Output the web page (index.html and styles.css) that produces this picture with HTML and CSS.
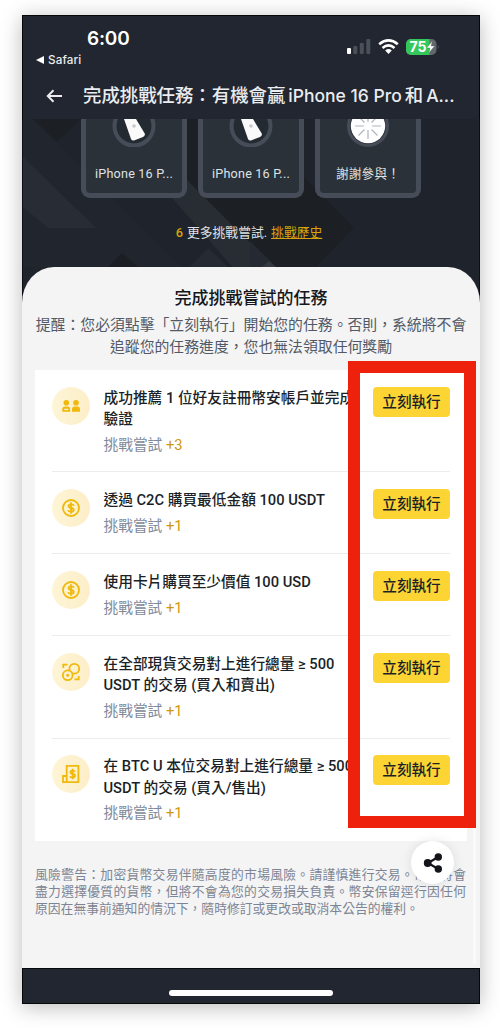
FILE: index.html
```html
<!DOCTYPE html>
<html lang="zh-Hant">
<head>
<meta charset="utf-8">
<title>完成挑戰任務</title>
<link rel="stylesheet" href="styles.css">
</head>
<body>
<main class="phone">
  <header class="top">
    <div class="status">
      <div class="clock">
        <div class="time">6:00</div>
        <div class="back-app"><svg width="8" height="8" viewBox="0 0 8 8"><path d="M0 4L8 0V8Z" fill="#fff"/></svg><span>Safari</span></div>
      </div>
      <div class="indicators">
        <svg width="24" height="16" viewBox="0 0 24 16"><rect y="9" width="4" height="6" rx="1" fill="#fff"/><g fill="#4b4f58"><rect x="6.3" y="7" width="4" height="8" rx="1"/><rect x="12.8" y="4" width="4" height="11" rx="1"/><rect x="19.3" y="0" width="4" height="15" rx="1"/></g></svg>
        <svg class="wifi" width="21" height="16" viewBox="0 0 21 16"><g fill="none" stroke="#fff" stroke-width="2.6"><path d="M1.2 5.2Q10.5 -2.4 19.8 5.2"/><path d="M4.5 8.9Q10.5 3.9 16.5 8.9"/></g><path d="M7.2 11.4Q10.5 8.8 13.8 11.4L10.5 15Z" fill="#fff"/></svg>
        <svg class="battery" width="34" height="16" viewBox="0 0 34 16"><defs><clipPath id="cell"><rect width="30.5" height="16" rx="5"/></clipPath></defs><g clip-path="url(#cell)"><rect width="31" height="16" fill="#63676d"/><rect width="23.5" height="16" fill="#34c759"/></g><path d="M31.8 5.5Q33.5 8 31.8 10.5Z" fill="#63676d"/><text x="3.6" y="13" class="charge">75</text><path d="M26.3 2L20.6 9H24L22.8 14L28.6 7H25.1Z" fill="#fff" stroke="#4c7b5a" stroke-width=".4"/></svg>
      </div>
    </div>
    <div class="nav">
      <svg width="17" height="14" viewBox="0 0 17 14"><path d="M16 7H2M7.5 1.3L1.8 7L7.5 12.7" fill="none" stroke="#eaecef" stroke-width="2"/></svg>
      <h1><span>完成挑戰任務：有機會贏</span><span class="latin">iPhone 16 Pro</span><span>和</span><span class="latin">A...</span></h1>
    </div>
  </header>

  <section class="hero">
    <svg class="pattern" width="456" height="184" viewBox="23 119 456 184">
      <path d="M23 119H33L158 244L181 267L213 267H23Z" fill="#21252d"/>
      <path d="M33 119H81L57 142Z" fill="#1c1f23"/>
      <path d="M23 157L96 228H48L23 207Z" fill="#282c34"/>
      <path d="M108 267L122 253L138 267Z" fill="#1b1e22"/>
      <path d="M180 119H304V177L354 227L316 267H270L180 180Z" fill="#1c1f23"/>
      <path d="M172 198L187 180L277 270H235Z" fill="#282c33"/>
      <path d="M190 267L208 248L228 267Z" fill="#262a32"/>
      <path d="M250 241L276 267H250Z" fill="#252931"/>
      <path d="M262 267L269 261L276 267Z" fill="#34383f"/>
    </svg>
    <div class="prizes">
      <div class="prize"><svg width="44" height="28" viewBox="0 0 44 28"><circle cx="22" cy="7" r="19.5" fill="#242a31" stroke="#474d58" stroke-width="4"/><path d="M12 0H24L33 15Q33 17 31 18L22 21.500Q20 22 19 20Z" fill="#fafafa"/><circle cx="22" cy="7" r="1.8" fill="#c8c9cd"/></svg><p>iPhone 16 P...</p></div>
      <div class="prize"><svg width="44" height="28" viewBox="0 0 44 28"><circle cx="22" cy="7" r="19.5" fill="#242a31" stroke="#474d58" stroke-width="4"/><path d="M12 0H24L33 15Q33 17 31 18L22 21.500Q20 22 19 20Z" fill="#fafafa"/><circle cx="22" cy="7" r="1.8" fill="#c8c9cd"/></svg><p>iPhone 16 P...</p></div>
      <div class="prize"><svg width="44" height="28" viewBox="0 0 44 28"><circle cx="22" cy="7" r="19.500" fill="#2b3139" stroke="#474d58" stroke-width="3"/><circle cx="22" cy="7" r="17.2" fill="#fff"/><path d="M9 7H18M26 7H35M22 11V20M22 3V0M18.500 10.500L12.500 16.500M25.500 10.500L31.500 16.500M18.500 3.500L14 -1M25.500 3.500L30 -1" stroke="#aeb4bc" stroke-width="1.200"/></svg><p>謝謝參與！</p></div>
    </div>
    <p class="attempts"><b>6</b> 更多挑戰嘗試. <a>挑戰歷史</a></p>
  </section>

  <section class="sheet">
    <h2>完成挑戰嘗試的任務</h2>
    <p class="notice">提醒：您必須點擊「立刻執行」開始您的任務。否則，系統將不會<br>追蹤您的任務進度，您也無法領取任何獎勵</p>
    <div class="tasks">
      <article class="task">
        <div class="badge"><svg width="20" height="20" viewBox="0 0 20 20"><g fill="#f0b90b"><circle cx="5.300" cy="6.800" r="2.800"/><circle cx="15" cy="6.800" r="2.800"/><path d="M1.300 15.800V13.500Q1.300 10.600 4 10.600H6.500Q9.200 10.600 9.200 13.500V15.800ZM11 15.800V13.500Q11 10.600 13.700 10.600H16.200Q19 10.600 19 13.500V15.800Z"/></g><path d="M3.200 13.400H7.300" stroke="#fdf1ce" stroke-width="1.300"/></svg></div>
        <div class="info"><h3>成功推薦 1 位好友註冊幣安帳戶並完成<br>驗證</h3><p>挑戰嘗試 <em>+3</em></p></div>
        <button>立刻執行</button>
      </article>
      <article class="task">
        <div class="badge"><svg width="20" height="20" viewBox="0 0 20 20"><circle cx="10" cy="10" r="8" fill="none" stroke="#f0b90b" stroke-width="1.800"/><path d="M13 7.700Q12.300 6.300 10 6.300Q7.500 6.300 7.500 8.100Q7.500 9.600 10 10Q12.700 10.400 12.700 12Q12.700 13.700 10 13.700Q7.500 13.700 7 12.200M10 4.300V15.700" fill="none" stroke="#f0b90b" stroke-width="1.800"/></svg></div>
        <div class="info"><h3>透過 C2C 購買最低金額 100 USDT</h3><p>挑戰嘗試 <em>+1</em></p></div>
        <button>立刻執行</button>
      </article>
      <article class="task">
        <div class="badge"><svg width="20" height="20" viewBox="0 0 20 20"><circle cx="10" cy="10" r="8" fill="none" stroke="#f0b90b" stroke-width="1.800"/><path d="M13 7.700Q12.300 6.300 10 6.300Q7.500 6.300 7.500 8.100Q7.500 9.600 10 10Q12.700 10.400 12.700 12Q12.700 13.700 10 13.700Q7.500 13.700 7 12.200M10 4.300V15.700" fill="none" stroke="#f0b90b" stroke-width="1.800"/></svg></div>
        <div class="info"><h3>使用卡片購買至少價值 100 USD</h3><p>挑戰嘗試 <em>+1</em></p></div>
        <button>立刻執行</button>
      </article>
      <article class="task">
        <div class="badge"><svg width="20" height="20" viewBox="0 0 20 20"><g fill="none" stroke="#f0b90b" stroke-width="1.800"><circle cx="13.300" cy="6.700" r="4.900"/><circle cx="6.700" cy="13.300" r="4.900" fill="#fdf1cf"/><path d="M2.300 6V2.600H6.500M17.700 14V17.400H13.500"/></g><circle cx="6.700" cy="13.300" r="1.500" fill="#f0b90b"/></svg></div>
        <div class="info"><h3>在全部現貨交易對上進行總量 ≥ 500<br>USDT 的交易 (買入和賣出)</h3><p>挑戰嘗試 <em>+1</em></p></div>
        <button>立刻執行</button>
      </article>
      <article class="task">
        <div class="badge"><svg width="20" height="20" viewBox="0 0 20 20"><g fill="none" stroke="#f0b90b" stroke-width="1.800"><path d="M5.700 1.900H17.400V18.100H5.700ZM5.700 12H2V18.100H5.700"/><path d="M14 7.700Q13.500 6.600 11.600 6.600Q9.400 6.600 9.400 8.300Q9.400 9.600 11.600 10Q14 10.400 14 11.800Q14 13.500 11.600 13.500Q9.400 13.500 9 12.200M11.600 4.800V15.300"/></g></svg></div>
        <div class="info"><h3>在 BTC U 本位交易對上進行總量 ≥ 500<br>USDT 的交易 (買入/售出)</h3><p>挑戰嘗試 <em>+1</em></p></div>
        <button>立刻執行</button>
      </article>
    </div>
    <p class="risk"><span>風險警告：加密貨幣交易伴隨高度的市場風險。請謹慎進行交易。幣安將會</span><br><span>盡力選擇優質的貨幣，但將不會為您的交易損失負責。幣安保留逕行因任何</span><br>原因在無事前通知的情況下，隨時修訂或更改或取消本公告的權利。</p>
  </section>
  <footer class="home"><div class="home-bar"></div></footer>
  <div class="scroll-thumb"></div>
  <div class="share"><svg width="20" height="20" viewBox="0 0 20 20"><path d="M15.200 4L5 10L15.200 16" fill="none" stroke="#14151a" stroke-width="2.200"/><g fill="#14151a"><circle cx="4.700" cy="10" r="3.900"/><circle cx="15.300" cy="4" r="3.700"/><circle cx="15.300" cy="16" r="3.700"/></g></svg></div>
  <div class="highlight"></div>
</main>
</body>
</html>
```
FILE: styles.css
```css
* { box-sizing: border-box; margin: 0; padding: 0; }
body {
  background: #fff;
  padding: 15px 20px 24px 22px;
  font-family: Roboto, "Noto Sans CJK TC", sans-serif;
  white-space: nowrap;
}
svg { display: block; flex: none; }
.phone {
  position: relative;
  width: 458px;
  height: 989px;
  display: flex;
  flex-direction: column;
  background: #f4f4f4;
  box-shadow: 0 3px 20px rgba(0, 0, 0, .27);
}
.top {
  height: 104px;
  background: #212630;
  border: solid #05070b;
  border-width: 1px 1px 0;
  color: #eaecef;
}
.status { display: flex; justify-content: space-between; height: 56px; font-family: Inter, sans-serif; }
.clock { padding: 10px 0 0 13px; }
.time { padding-left: 51px; font-size: 19px; line-height: 25px; font-weight: 600; color: #fff; letter-spacing: -.2px; }
.back-app { display: flex; align-items: center; gap: 4px; height: 15px; margin-top: 1px; font-size: 11.700px; font-weight: 500; letter-spacing: .1px; }
.indicators { display: flex; padding: 23px 39px 0 0; }
.wifi { margin-left: 7px; }
.battery { margin-left: 7px; }
.charge { font: 700 14px Inter, sans-serif; fill: #fff; }
.nav { display: flex; align-items: center; height: 47px; padding-left: 23px; gap: 20px; }
.nav h1 { display: flex; align-items: baseline; gap: 3px; font-size: 18.400px; font-weight: 500; line-height: 28px; }
.latin { font-family: Inter, sans-serif; font-size: 17.500px; }
.hero {
  position: relative;
  height: 184px;
  margin-bottom: -36px;
  flex: none;
  background: #1f232b;
  border: solid #0c0f14;
  border-width: 0 1px;
  color: #dfe1e5;
}
.pattern { position: absolute; left: 0; top: 0; }
.prizes { position: relative; display: flex; gap: 11px; padding-left: 58px; }
.prize {
  width: 106px;
  height: 79px;
  border: 5px solid #474d58;
  border-top: 0;
  border-radius: 0 0 9px 9px;
  background: #2b3138;
  display: flex;
  flex-direction: column;
  align-items: center;
}
.prize p { margin-top: 18px; font-size: 12.600px; line-height: 18px; letter-spacing: .2px; }
.attempts { position: relative; margin-top: 25px; padding-right: 4px; text-align: center; font-size: 12.800px; line-height: 20px; word-spacing: .8px; }
.attempts b { color: #d9a40b; font-weight: 500; }
.attempts a { color: #d9a40b; text-decoration: underline; }
.sheet {
  position: relative;
  height: 701px;
  padding: 18px 13px 0;
  border-radius: 32px 32px 0 0 / 36px 36px 0 0;
  background: #f4f4f4;
}
.sheet h2 { text-align: center; font-size: 17px; line-height: 26px; font-weight: 500; color: #14171c; }
.notice { margin-top: 4px; text-align: center; font-size: 14.850px; line-height: 21.500px; color: #525966; }
.tasks { margin-top: 12px; height: 471px; background: #fff; padding: 0 17px; }
.task {
  display: flex;
  align-items: flex-start;
  padding: 16.600px 0 15.300px;
  border-bottom: 1px solid #ececee;
}
.task:last-child { border: 0; }
.badge {
  width: 38px;
  height: 38px;
  border-radius: 50%;
  background: linear-gradient(90deg, #fef5d6, #fceec8);
  display: grid;
  place-items: center;
  flex: none;
}
.info { margin-left: 13.500px; width: 248px; min-height: 49px; padding-top: 1.200px; }
.info h3 { font-size: 14.700px; line-height: 21.100px; font-weight: 500; color: #1b1f27; }
.info p { margin-top: 4.700px; font-size: 14.700px; line-height: 21.500px; color: #818a9a; }
.info em { font-style: normal; color: #cf970e; }
.task button {
  margin-left: auto;
  width: 77px;
  height: 30px;
  border: 0;
  border-radius: 4px;
  background: #fcd535;
  color: #1b1f27;
  font: 500 14.600px/30px Roboto, "Noto Sans CJK TC", sans-serif;
}
.risk { margin-top: 25px; font-size: 12.800px; line-height: 17px; color: #7c8595; }
.risk span { letter-spacing: .27px; }
.home { display: flex; justify-content: center; height: 36px; padding-top: 21px; border: 1px solid #05070b; background: #212630; }
.home-bar { width: 164px; height: 6px; border-radius: 3px; background: #fff; }
.scroll-thumb { position: absolute; left: 451px; top: 813px; width: 3px; height: 136px; border-radius: 2px; background: #fafafa; }
.share {
  position: absolute;
  left: 389px;
  top: 826px;
  width: 43px;
  height: 43px;
  display: grid;
  place-items: center;
  border-radius: 50%;
  background: #fff;
  box-shadow: 0 0 12px rgba(0, 0, 0, .1);
}
.highlight { position: absolute; left: 326px; top: 346px; width: 128px; height: 467px; border: 12px solid #ee220c; }
```
